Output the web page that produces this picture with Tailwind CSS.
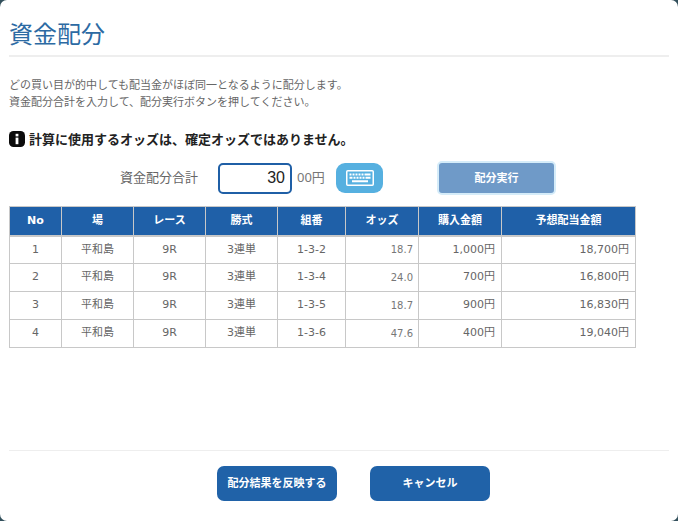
<!DOCTYPE html>
<html lang="ja">
<head>
<meta charset="utf-8">
<script src="https://cdn.jsdelivr.net/npm/@tailwindcss/browser@4"></script>
</head>
<body class="bg-[#33505c] m-0">
<div class="w-[678px] h-[521px] bg-white rounded-[7px] overflow-hidden px-[9px] flex flex-col font-['Noto_Sans','Noto_Sans_CJK_JP',sans-serif] text-[#555]">
  <div class="h-[57px] border-b-2 border-[#eeeeee] w-[660px] flex items-start pt-[17px]">
    <h1 class="text-[24px] leading-[34px] font-normal text-[#2c6aa3]">資金配分</h1>
  </div>
  <div class="mt-[19px] text-[11px] leading-[17px] text-[#666]">
    <p>どの買い目が的中しても配当金がほぼ同一となるように配分します。</p>
    <p>資金配分合計を入力して、配分実行ボタンを押してください。</p>
  </div>
  <div class="mt-[20px] flex items-center h-[18px] gap-[4px]">
    <svg width="16" height="16" viewBox="0 0 16 16" class="shrink-0"><rect width="16" height="16" rx="4.5" fill="#0b0b0b"/><rect x="6.6" y="2.8" width="2.8" height="2.6" fill="#fff"/><rect x="6.6" y="6.6" width="2.8" height="6.6" fill="#fff"/></svg>
    <p class="text-[13px] font-bold text-[#222] leading-[18px]">計算に使用するオッズは、確定オッズではありません。</p>
  </div>
  <div class="mt-[13px] h-[34px] flex items-center">
    <span class="ml-[111px] w-[98px] text-[13px] text-[#666]">資金配分合計</span>
    <input value="30" class="w-[74px] h-[31px] border-2 border-[#1f5fa6] rounded-[5px] text-right pr-[5px] text-[16px] text-[#222] font-['Liberation_Sans',sans-serif] outline-none">
    <span class="ml-[5px] w-[39px] text-[13px] text-[#777]">00円</span>
    <button class="w-[47px] h-[30px] rounded-[9px] bg-[#56b0e0] flex items-center justify-center">
      <svg width="28" height="16" viewBox="0 0 28 16" fill="none">
        <rect x="0.75" y="0.75" width="26.5" height="14.5" rx="1" stroke="#fff" stroke-width="1.5"/>
        <path d="M3.5 4.5h2M6.5 4.5h2M9.5 4.5h2M12.5 4.5h2M15.5 4.5h2M18.5 4.5h6M3.5 7.8h3M7.5 7.8h2M10.5 7.8h2M13.5 7.8h2M16.5 7.8h2M19.5 7.8h5M6 11.2h16" stroke="#fff" stroke-width="2"/>
      </svg>
    </button>
    <button class="ml-[54px] w-[119px] h-[34px] rounded-[5px] bg-[#6f9ac8] border-2 border-[#d5ecf9] text-white text-[11px] font-bold">配分実行</button>
  </div>
  <table class="mt-[11px] w-[626px] table-fixed border-collapse text-[11px] text-[#666] font-['DejaVu_Sans','Noto_Sans_CJK_JP',sans-serif]">
    <colgroup>
      <col class="w-[52px]"><col class="w-[72px]"><col class="w-[72px]"><col class="w-[72px]"><col class="w-[68px]"><col class="w-[73px]"><col class="w-[83px]"><col class="w-[134px]">
    </colgroup>
    <thead>
      <tr class="h-[29px] bg-[#1f60a8] text-white text-[11px] font-bold">
        <th class="border border-[#c8c8c8] border-b-2">No</th>
        <th class="border border-[#c8c8c8] border-b-2">場</th>
        <th class="border border-[#c8c8c8] border-b-2">レース</th>
        <th class="border border-[#c8c8c8] border-b-2">勝式</th>
        <th class="border border-[#c8c8c8] border-b-2">組番</th>
        <th class="border border-[#c8c8c8] border-b-2">オッズ</th>
        <th class="border border-[#c8c8c8] border-b-2">購入金額</th>
        <th class="border border-[#c8c8c8] border-b-2">予想配当金額</th>
      </tr>
    </thead>
    <tbody class="text-center">
      <tr class="h-[28px]"><td class="border border-[#c8c8c8]">1</td><td class="border border-[#c8c8c8]">平和島</td><td class="border border-[#c8c8c8]">9R</td><td class="border border-[#c8c8c8]">3連単</td><td class="border border-[#c8c8c8]">1-3-2</td><td class="border border-[#c8c8c8] text-right pr-[5px] text-[10px] text-[#777]">18.7</td><td class="border border-[#c8c8c8] text-right pr-[6px]">1,000円</td><td class="border border-[#c8c8c8] text-right pr-[6px]">18,700円</td></tr>
      <tr class="h-[28px]"><td class="border border-[#c8c8c8]">2</td><td class="border border-[#c8c8c8]">平和島</td><td class="border border-[#c8c8c8]">9R</td><td class="border border-[#c8c8c8]">3連単</td><td class="border border-[#c8c8c8]">1-3-4</td><td class="border border-[#c8c8c8] text-right pr-[5px] text-[10px] text-[#777]">24.0</td><td class="border border-[#c8c8c8] text-right pr-[6px]">700円</td><td class="border border-[#c8c8c8] text-right pr-[6px]">16,800円</td></tr>
      <tr class="h-[28px]"><td class="border border-[#c8c8c8]">3</td><td class="border border-[#c8c8c8]">平和島</td><td class="border border-[#c8c8c8]">9R</td><td class="border border-[#c8c8c8]">3連単</td><td class="border border-[#c8c8c8]">1-3-5</td><td class="border border-[#c8c8c8] text-right pr-[5px] text-[10px] text-[#777]">18.7</td><td class="border border-[#c8c8c8] text-right pr-[6px]">900円</td><td class="border border-[#c8c8c8] text-right pr-[6px]">16,830円</td></tr>
      <tr class="h-[28px]"><td class="border border-[#c8c8c8]">4</td><td class="border border-[#c8c8c8]">平和島</td><td class="border border-[#c8c8c8]">9R</td><td class="border border-[#c8c8c8]">3連単</td><td class="border border-[#c8c8c8]">1-3-6</td><td class="border border-[#c8c8c8] text-right pr-[5px] text-[10px] text-[#777]">47.6</td><td class="border border-[#c8c8c8] text-right pr-[6px]">400円</td><td class="border border-[#c8c8c8] text-right pr-[6px]">19,040円</td></tr>
    </tbody>
  </table>
  <div class="mt-auto w-[660px] h-[71px] border-t border-[#eeeeee] flex gap-[33px] pt-[15px] pl-[208px]">
    <button class="w-[120px] h-[35px] rounded-[7px] bg-[#2062a8] text-white text-[11px] font-bold">配分結果を反映する</button>
    <button class="w-[120px] h-[35px] rounded-[7px] bg-[#2062a8] text-white text-[11px] font-bold">キャンセル</button>
  </div>
</div>
</body>
</html>
